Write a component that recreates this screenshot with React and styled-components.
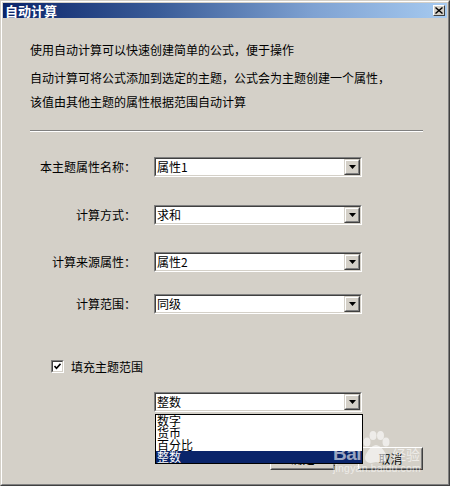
import React from "react";
import styled, { createGlobalStyle } from "styled-components";

const Global = createGlobalStyle`
  html, body { margin: 0; padding: 0; background: #d4d0c8; }
  body { font-family: "Noto Sans CJK SC", "Liberation Sans", sans-serif; font-size: 12px; color: #000; }
  * { box-sizing: border-box; }
`;

const Win = styled.div`
  width: 450px;
  height: 486px;
  border: 1px solid;
  border-color: #d4d0c8 #404040 #404040 #d4d0c8;
  background: #d4d0c8;
  position: relative;
`;

const WinInner = styled.div`
  height: 100%;
  border: 1px solid;
  border-color: #ffffff #808080 #808080 #ffffff;
  padding: 1px;
  display: flex;
  flex-direction: column;
`;

const TitleBar = styled.div`
  height: 15px;
  display: flex;
  align-items: center;
  justify-content: space-between;
  padding: 0 2px 0 2px;
  background: linear-gradient(to right, #0a246a 0%, #3a5c98 35%, #7fa2d2 70%, #a6caf0 100%);
`;

const TitleText = styled.span`
  color: #fff;
  font-weight: bold;
  font-size: 13px;
  line-height: 15px;
`;

const CloseBtn = styled.div`
  width: 12px;
  height: 11px;
  background: #d4d0c8;
  border: 1px solid;
  border-color: #fff #404040 #404040 #fff;
  display: flex;
  align-items: center;
  justify-content: center;
`;

const Body = styled.div`
  flex: 1;
  display: flex;
  flex-direction: column;
  padding: 0 24px 0 27px;
`;

const Para = styled.div`
  line-height: 24px;
  margin-top: ${(p) => p.$top}px;
`;

const Sep = styled.div`
  margin-top: 16px;
  height: 2px;
  border-top: 1px solid #808080;
  border-bottom: 1px solid #ffffff;
`;

const Row = styled.div`
  display: flex;
  align-items: center;
  margin-top: ${(p) => p.$top}px;
  position: relative;
`;

const Label = styled.div`
  width: 107px;
  text-align: right;
  padding-right: 1px;
  margin-right: 17px;
  line-height: 20px;
  white-space: nowrap;
`;

const SelectBox = styled.div`
  width: 208px;
  height: 20px;
  border: 1px solid;
  border-color: #808080 #ffffff #ffffff #808080;
  position: relative;
`;

const SelectInner = styled.div`
  height: 100%;
  border: 1px solid;
  border-color: #404040 #d4d0c8 #d4d0c8 #404040;
  background: #fff;
  display: flex;
  align-items: center;
`;

const SelectValue = styled.div`
  flex: 1;
  padding-left: 1px;
  line-height: 16px;
  font-size: 12px;
`;

const DropBtn = styled.div`
  width: 16px;
  height: 16px;
  background: #d4d0c8;
  border: 1px solid;
  border-color: #d4d0c8 #404040 #404040 #d4d0c8;
  display: flex;
`;

const DropBtnInner = styled.div`
  flex: 1;
  border: 1px solid;
  border-color: #fff #808080 #808080 #fff;
  display: flex;
  align-items: center;
  justify-content: center;
`;

const List = styled.div`
  position: absolute;
  left: 0;
  top: 21px;
  width: 208px;
  border: 1px solid #000;
  background: #fff;
  z-index: 5;
`;

const Item = styled.div`
  height: 12px;
  line-height: 12px;
  font-size: 12px;
  padding-left: 1px;
  color: ${(p) => (p.$active ? "#fff" : "#000")};
  background: ${(p) => (p.$active ? "#0a246a" : "#fff")};
`;

const CheckRow = styled.div`
  display: flex;
  align-items: center;
  margin-top: 44px;
  padding-left: 21px;
  height: 16px;
`;

const CheckBox = styled.div`
  width: 13px;
  height: 13px;
  border: 1px solid;
  border-color: #808080 #fff #fff #808080;
  margin-right: 7px;
`;

const CheckInner = styled.div`
  width: 100%;
  height: 100%;
  border: 1px solid;
  border-color: #404040 #d4d0c8 #d4d0c8 #404040;
  background: #fff;
  display: flex;
  align-items: center;
  justify-content: center;
`;

const Buttons = styled.div`
  display: flex;
  justify-content: flex-end;
  gap: 23px;
  margin-top: 35px;
`;

const Button = styled.div`
  width: 65px;
  height: 23px;
  border: 1px solid;
  border-color: #fff #404040 #404040 #fff;
  display: flex;
`;

const ButtonInner = styled.div`
  flex: 1;
  border: 1px solid;
  border-color: #d4d0c8 #808080 #808080 #d4d0c8;
  display: flex;
  align-items: center;
  justify-content: center;
  font-size: 12px;
`;

const Watermark = styled.div`
  position: absolute;
  left: 332px;
  top: 428px;
  width: 92px;
  color: rgba(255, 255, 255, 0.6);
  z-index: 10;
  pointer-events: none;
`;

const WmTop = styled.div`
  display: flex;
  align-items: flex-end;
  height: 34px;
`;

const WmBai = styled.span`
  font-family: "Liberation Sans", sans-serif;
  font-weight: bold;
  font-size: 19px;
  line-height: 18px;
  letter-spacing: -0.5px;
`;

const WmJy = styled.span`
  font-size: 14px;
  line-height: 18px;
  margin-left: 1px;
`;

const WmUrl = styled.div`
  font-family: "Liberation Sans", sans-serif;
  font-size: 10.5px;
  line-height: 11px;
  letter-spacing: 0.2px;
`;

function Arrow() {
  return (
    <svg width="7" height="4" viewBox="0 0 7 4">
      <path d="M0 0h7L3.5 4z" fill="#000" />
    </svg>
  );
}

function Select({ value, children }) {
  return (
    <SelectBox>
      <SelectInner>
        <SelectValue>{value}</SelectValue>
        <DropBtn>
          <DropBtnInner>
            <Arrow />
          </DropBtnInner>
        </DropBtn>
      </SelectInner>
      {children}
    </SelectBox>
  );
}

function Paw() {
  return (
    <svg width="30" height="32" viewBox="0 0 30 32">
      <g fill="rgba(255,255,255,0.6)">
        <ellipse cx="6" cy="11" rx="3.5" ry="4.5" />
        <ellipse cx="12" cy="4.5" rx="3.5" ry="4.5" />
        <ellipse cx="19.5" cy="4.5" rx="3.5" ry="4.5" />
        <ellipse cx="25" cy="11" rx="3.5" ry="4.5" />
        <path d="M15 14c-5 0-11 9-11 13 0 4 4 5 6 5 2 0 3-1 5-1s3 1 5 1c2 0 6-1 6-5 0-4-6-13-11-13z" />
      </g>
    </svg>
  );
}

export default function App() {
  return (
    <>
      <Global />
      <Win>
        <WinInner>
          <TitleBar>
            <TitleText>自动计算</TitleText>
            <CloseBtn>
              <svg width="8" height="7" viewBox="0 0 8 7">
                <path d="M0.5 0.5l7 6M7.5 0.5l-7 6" stroke="#000" strokeWidth="1.4" />
              </svg>
            </CloseBtn>
          </TitleBar>
          <Body>
            <Para $top={20}>使用自动计算可以快速创建简单的公式，便于操作</Para>
            <Para $top={4}>
              自动计算可将公式添加到选定的主题，公式会为主题创建一个属性，
              <br />
              该值由其他主题的属性根据范围自动计算
            </Para>
            <Sep />
            <Row $top={25}>
              <Label>本主题属性名称：</Label>
              <Select value="属性1" />
            </Row>
            <Row $top={28}>
              <Label>计算方式：</Label>
              <Select value="求和" />
            </Row>
            <Row $top={27}>
              <Label>计算来源属性：</Label>
              <Select value="属性2" />
            </Row>
            <Row $top={22}>
              <Label>计算范围：</Label>
              <Select value="同级" />
            </Row>
            <CheckRow>
              <CheckBox>
                <CheckInner>
                  <svg width="7" height="7" viewBox="0 0 7 7">
                    <path d="M0.5 3l2 2.2L6.5 0.8" stroke="#000" strokeWidth="1.6" fill="none" />
                  </svg>
                </CheckInner>
              </CheckBox>
              <span>填充主题范围</span>
            </CheckRow>
            <Row $top={18}>
              <Label />
              <Select value="整数">
                <List>
                  <Item>数字</Item>
                  <Item>货币</Item>
                  <Item>百分比</Item>
                  <Item $active>整数</Item>
                </List>
              </Select>
            </Row>
            <Buttons>
              <Button>
                <ButtonInner>确定</ButtonInner>
              </Button>
              <Button>
                <ButtonInner>取消</ButtonInner>
              </Button>
            </Buttons>
          </Body>
        </WinInner>
        <Watermark>
          <WmTop>
            <WmBai>Bai</WmBai>
            <Paw />
            <WmJy>经验</WmJy>
          </WmTop>
          <WmUrl>jingyan.baidu.com</WmUrl>
        </Watermark>
      </Win>
    </>
  );
}
